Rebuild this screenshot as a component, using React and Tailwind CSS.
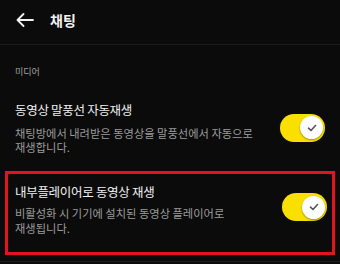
import React from "react";

function Toggle() {
  return (
    <div className="flex h-[28px] w-[45px] shrink-0 items-center justify-end rounded-full bg-[#f9e000] pr-[2px]">
      <div className="flex h-[23px] w-[23px] items-center justify-center rounded-full bg-white shadow-[0_1px_2px_rgba(0,0,0,0.35)]">
        <svg width="10" height="8" viewBox="0 0 10 8" fill="none">
          <path d="M1.5 4.2 L4 6.5 L8.5 1.5" stroke="#555" strokeWidth="1.6" strokeLinecap="round" strokeLinejoin="round" />
        </svg>
      </div>
    </div>
  );
}

export default function App() {
  return (
    <div className="h-[264px] w-[340px] overflow-hidden bg-[#0b0b0b] font-['Noto_Sans_CJK_KR','Noto_Sans',sans-serif]">
      <div className="flex h-[45px] items-center border-b border-[#1c1c1c] pb-[4px]">
        <svg className="ml-[16px]" width="18" height="14" viewBox="0 0 18 14" fill="none">
          <path d="M17 7H1.5 M7.5 1 L1.5 7 L7.5 13" stroke="#f2f2f2" strokeWidth="1.8" strokeLinecap="round" strokeLinejoin="round" />
        </svg>
        <span className="ml-[16px] text-[14px] font-bold leading-[18px] text-[#f2f2f2]">채팅</span>
      </div>

      <div className="ml-[15px] mt-[21px] text-[9px] leading-[12px] text-[#a3a3a3]">미디어</div>

      <div className="mt-[23px] flex items-center pl-[15px] pr-[15px]">
        <div className="flex-1 pr-[20px]">
          <div className="text-[12.5px] leading-[18px] tracking-[-0.3px] text-[#f0f0f0]">동영상 말풍선 자동재생</div>
          <div className="mt-[7px] break-keep text-[11.25px] leading-[14px] text-[#9c9c9c]">
            채팅방에서 내려받은 동영상을 말풍선에서 자동으로 재생합니다.
          </div>
        </div>
        <Toggle />
      </div>

      <div className="mx-[5px] mt-[17px] flex items-center border-[3px] border-[#e3131f] pb-[17px] pl-[7px] pr-[5px] pt-[9px]">
        <div className="flex-1 pr-[20px]">
          <div className="text-[12.5px] leading-[18px] tracking-[-0.3px] text-[#f0f0f0]">내부플레이어로 동영상 재생</div>
          <div className="mt-[5px] break-keep text-[11.25px] leading-[14.5px] text-[#9c9c9c]">
            비활성화 시 기기에 설치된 동영상 플레이어로 재생됩니다.
          </div>
        </div>
        <div className="mb-[4px]">
          <Toggle />
        </div>
      </div>

      <div className="mt-[6px] border-t border-[#1c1c1c]" />
    </div>
  );
}
